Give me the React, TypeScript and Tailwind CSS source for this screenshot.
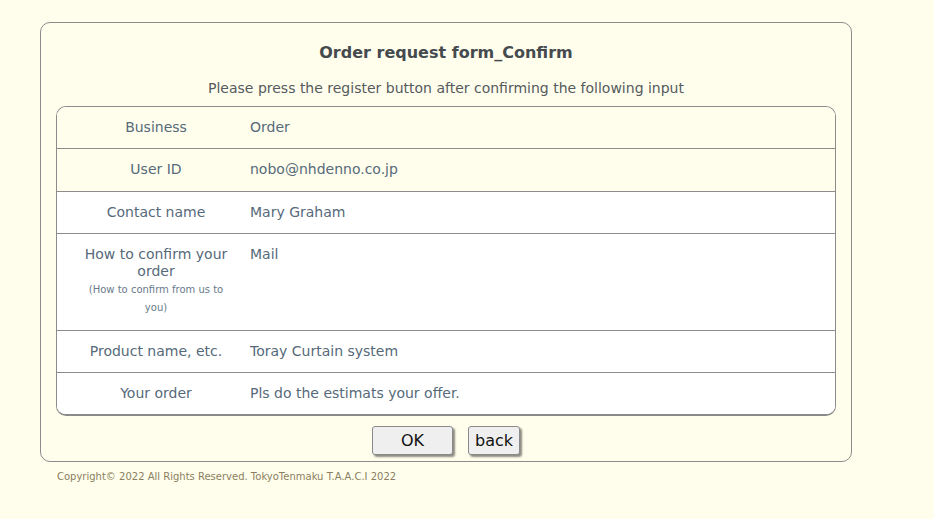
import React from "react";

const rows = [
  { label: "Business", value: "Order", cream: true },
  { label: "User ID", value: "nobo@nhdenno.co.jp", cream: true },
  { label: "Contact name", value: "Mary Graham" },
  {
    label: "How to confirm your order",
    note: "(How to confirm from us to you)",
    value: "Mail",
  },
  { label: "Product name, etc.", value: "Toray Curtain system" },
  { label: "Your order", value: "Pls do the estimats your offer." },
];

export default function App() {
  return (
    <div
      className="min-h-[519px] w-full bg-[#fffeec] pt-[22px] pl-[40px]"
      style={{ fontFamily: '"DejaVu Sans", Verdana, sans-serif' }}
    >
      <div className="w-[812px] h-[440px] rounded-[10px] border border-[#8c8c8c] px-[15px] pt-[19px]">
        <h1 className="text-center text-[16px] font-bold text-[#454a4f] leading-[22px]">
          Order request form_Confirm
        </h1>
        <p className="mt-[15px] text-center text-[14px] text-[#555a5e] leading-[18px]">
          Please press the register button after confirming the following input
        </p>
        <div className="mt-[9px] w-[780px] overflow-hidden rounded-[10px] border border-[#8c8c8c] border-b-2 border-b-[#8a8a8a] bg-white">
          {rows.map((r, i) => (
            <div
              key={r.label}
              className={`flex ${i > 0 ? "border-t border-[#8c8c8c]" : ""} ${
                r.cream ? "bg-[#fffeec]" : "bg-white"
              }`}
            >
              <div className="w-[188px] shrink-0 pl-[12px] pr-[2px] pt-[12px] pb-[12.4px] text-center text-[14px] leading-[17px] text-[#566a7a]">
                {r.label}
                {r.note && (
                  <div className="mt-[1px] px-[10px] text-[10px] leading-[18px] text-[#6a7a8a]">
                    {r.note}
                  </div>
                )}
              </div>
              <div className="pl-[5px] pt-[12px] pb-[12.4px] text-[14px] leading-[17px] text-[#566a7a]">
                {r.value}
              </div>
            </div>
          ))}
        </div>
        <div className="mt-[10px] flex justify-center gap-[15px]">
          <button className="h-[29px] w-[81px] rounded-[3px] border border-[#8a8a8a] bg-[#efefef] text-[16px] leading-none text-[#111] shadow-[2px_2px_2px_rgba(0,0,0,0.45)]">
            OK
          </button>
          <button className="h-[29px] w-[52px] rounded-[3px] border border-[#8a8a8a] bg-[#efefef] text-[16px] leading-none text-[#111] shadow-[2px_2px_2px_rgba(0,0,0,0.45)]">
            back
          </button>
        </div>
      </div>
      <p className="mt-[8px] pl-[17px] text-[10px] leading-[14px] text-[#8a7e60]">
        Copyright© 2022 All Rights Reserved. TokyoTenmaku T.A.A.C.I 2022
      </p>
    </div>
  );
}
